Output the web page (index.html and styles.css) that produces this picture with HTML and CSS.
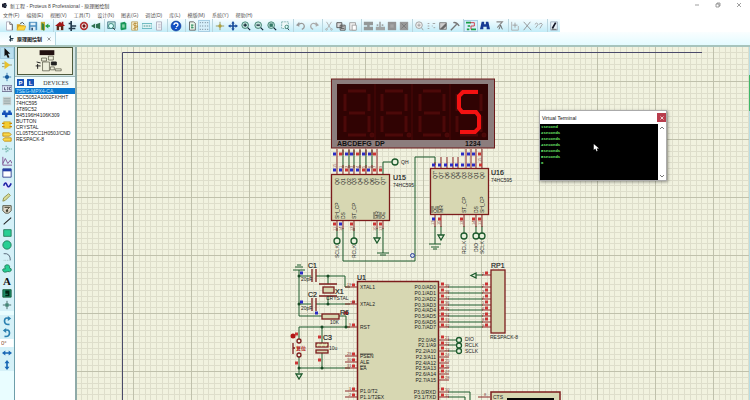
FILE: index.html
```
<!DOCTYPE html>
<html lang="zh-CN">
<head>
    <meta charset="UTF-8">
    <meta name="viewport" content="width=device-width, initial-scale=1.0">
    <title>新工程 - Proteus 8 Professional - 原理图绘制</title>
    <link rel="stylesheet" href="styles.css">
</head>
<body>

    <!-- Title Bar -->
    <header class="titlebar">
        <svg class="app-icon" viewBox="0 0 6 6"><path d="M0 1h2v4h-2zM2 0h3v6h-3z" fill="#223"/><path d="M3 2h3v2h-3z" fill="#345"/></svg>
        <h1>新工程 - Proteus 8 Professional - 原理图绘制</h1>
        <div class="window-buttons">
            <button aria-label="Minimize"><svg viewBox="0 0 8 8"><path d="M2 4h4"/></svg></button>
            <button aria-label="Restore"><svg viewBox="0 0 8 8"><path d="M2 3h3v3h-3zM3 3v-1h3v3h-1"/></svg></button>
            <button aria-label="Close"><svg viewBox="0 0 8 8"><path d="M2 2l4 4M6 2l-4 4"/></svg></button>
        </div>
    </header>

    <!-- Menu -->
    <nav class="menu">
        <a href="#">文件(F)</a>
        <a href="#">编辑(E)</a>
        <a href="#">视图(V)</a>
        <a href="#">工具(T)</a>
        <a href="#">设计(N)</a>
        <a href="#">图表(G)</a>
        <a href="#">调试(D)</a>
        <a href="#">库(L)</a>
        <a href="#">模版(M)</a>
        <a href="#">系统(Y)</a>
        <a href="#">帮助(H)</a>
    </nav>

    <!-- Toolbar -->
    <div class="toolbar">
        <div class="group">
            <button aria-label="New"><svg viewBox="0 0 12 12"><path d="M3 1h4l3 3v7h-7z" fill="#fff" stroke="#aab"/><path d="M7 1v3h3v7" fill="none" stroke="#555"/></svg></button>
            <button aria-label="Open"><svg viewBox="0 0 12 12"><path d="M1 4h4l1 1h4v5h-9z" fill="#d9a520"/><path d="M3 6h9l-2 5h-9z" fill="#ffd53a" stroke="#b8860b" stroke-width=".5"/><path d="M5 3q3-3 5 1" fill="none" stroke="#333"/></svg></button>
            <button aria-label="Save"><svg viewBox="0 0 12 12"><path d="M1 1h10v10h-10z" fill="#4c8fc0"/><path d="M3 2h6v3h-6zM3 7h6v4h-6z" fill="#dceef8"/><path d="M4 8h2v3h-2z" fill="#357"/></svg></button>
            <button aria-label="Close project"><svg viewBox="0 0 12 12"><path d="M1 1h5v10h-5z" fill="#c9b23a"/><path d="M2 2l3 2v8l-3-2z" fill="#39823e"/><path d="M6 6l4-3v2h2v2h-2v2z" fill="#27a147"/></svg></button>
        </div>
        <div class="group">
            <button aria-label="Home"><svg viewBox="0 0 12 12"><path d="M0 6l6-5 2 2v-2h2v3l2 2z" fill="#a11717"/><path d="M2 6h8v5h-8z" fill="#5c2a1a"/><path d="M5 7h2v4h-2z" fill="#fff"/></svg></button>
            <button aria-label="Schematic"><svg viewBox="0 0 12 12"><path d="M5 0v12M2 3h4M6 6h5M2 9h8" stroke="#223a4c" stroke-width="2"/></svg></button>
            <button aria-label="PCB"><svg viewBox="0 0 12 12"><circle cx="6" cy="6" r="4" fill="#fff" stroke="#b03030" stroke-width="2"/><circle cx="6" cy="6" r="2" fill="#701818"/></svg></button>
            <button aria-label="3D viewer"><svg viewBox="0 0 12 12"><path d="M0 6l5-3v6zM6 4l5-2v8l-5-2z" fill="#2e7050"/></svg></button>
        </div>
        <div class="group">
            <button aria-label="Gerber"><svg viewBox="0 0 12 12"><path d="M2 1h9v8h-9z" fill="#bfe3dc" stroke="#478"/><circle cx="6" cy="6" r="3" fill="#dff" stroke="#287a6c"/><path d="M8 8l3 3" stroke="#333"/></svg></button>
            <button aria-label="Explorer"><svg viewBox="0 0 12 12"><path d="M3 2l5-1 2 2v7l-6 1-1-1z" fill="#199759"/><path d="M5 4h3v4h-3z" fill="#8bd8ac"/></svg></button>
            <button aria-label="Bill of materials"><svg viewBox="0 0 12 12"><path d="M2 1h7v10h-7z" fill="#f7efcf" stroke="#b99f5f"/><path d="M8 3q-4-1-4 1t4 2-4 3M6 2v9" fill="none" stroke="#b1842b"/></svg></button>
            <button aria-label="Source"><svg viewBox="0 0 12 12"><path d="M0 3h12v6h-12z" fill="#dff3f3" stroke="#5cb0b8"/><path d="M2 6h2M5 6h2M8 6h2" stroke="#388"/></svg></button>
            <button aria-label="Notes"><svg viewBox="0 0 12 12"><path d="M3 1h6v10h-6z" fill="#f3f6f8" stroke="#aab"/><path d="M5 4h3M5 6h3M5 8h3" stroke="#88a" stroke-width=".5"/></svg></button>
        </div>
        <div class="group help">
            <button aria-label="Help"><svg viewBox="0 0 12 12"><circle cx="6" cy="6" r="5" fill="#1150c4" stroke="#0a2e80" stroke-width=".5"/><path d="M4 5q0-2 2-2t2 2q0 1-2 2M6 8v1" fill="none" stroke="#fff" stroke-width="1.3"/></svg></button>
        </div>
        <div class="group">
            <button aria-label="Redraw"><svg viewBox="0 0 12 12"><path d="M3 1h5l2 2v8h-7z" fill="#eaf6ea" stroke="#555"/><path d="M5 5h3M5 8h3M6 4v5" stroke="#285"/></svg></button>
            <button class="pressed" aria-label="Grid"><svg viewBox="0 0 12 12"><path d="M1 2h10M1 6h10M1 10h10" stroke="#456" stroke-width="1" stroke-dasharray="1 2"/></svg></button>
        </div>
        <div class="group wide">
            <button aria-label="Origin"><svg viewBox="0 0 12 12"><path d="M6 1v10M1 6h10" stroke="#8a8a4c"/><circle cx="6" cy="6" r="2" fill="#b1a13a"/></svg></button>
            <button aria-label="Pan"><svg viewBox="0 0 12 12"><path d="M6 0l2 3h-1v2h2v-1l3 2-3 2v-1h-2v2h1l-2 3-2-3h1v-2h-2v1l-3-2 3-2v1h2v-2h-1z" fill="#184c9c"/></svg></button>
            <button aria-label="Zoom in"><svg viewBox="0 0 12 12"><circle cx="5" cy="5" r="4" fill="#bfe0da" stroke="#376"/><path d="M3 5h4M5 3v4M8 8l3 3" stroke="#123" stroke-width="1.4"/></svg></button>
            <button aria-label="Zoom out"><svg viewBox="0 0 12 12"><circle cx="5" cy="5" r="4" fill="#bfe0da" stroke="#376"/><path d="M3 5h4M8 8l3 3" stroke="#123" stroke-width="1.4"/></svg></button>
            <button aria-label="Zoom all"><svg viewBox="0 0 12 12"><circle cx="5" cy="5" r="4" fill="#bfe0da" stroke="#376"/><path d="M3 3h4v4h-4z" fill="#376"/><path d="M8 8l3 3" stroke="#123" stroke-width="1.4"/></svg></button>
            <button aria-label="Zoom area"><svg viewBox="0 0 12 12"><path d="M2 1h8v8h-8z" fill="#eef8f8" stroke="#7aa" stroke-dasharray="2 1"/><circle cx="8" cy="7" r="2" fill="#dff" stroke="#376"/><path d="M9 9l2 2" stroke="#123"/></svg></button>
        </div>
        <div class="group wide">
            <button aria-label="Undo"><svg viewBox="0 0 12 12"><path d="M3 4q6-3 7 2 0 3-3 4" fill="none" stroke="#999" stroke-width="1.5"/><path d="M0 5l4-4v6z" fill="#999"/></svg></button>
            <button aria-label="Redo"><svg viewBox="0 0 12 12"><path d="M9 4q-6-3-7 2 0 3 3 4" fill="none" stroke="#aaa" stroke-width="1.5"/><path d="M12 5l-4-4v6z" fill="#aaa"/></svg></button>
        </div>
        <div class="group">
            <button aria-label="Cut"><svg viewBox="0 0 12 12"><path d="M3 1l5 8M9 1l-5 8" stroke="#aaa"/><circle cx="3" cy="10" r="1" fill="none" stroke="#aaa"/><circle cx="9" cy="10" r="1" fill="none" stroke="#aaa"/></svg></button>
            <button aria-label="Copy"><svg viewBox="0 0 12 12"><path d="M1 2h6v6h-6zM5 5h6v6h-6z" fill="#ddd" stroke="#444"/><path d="M6 7h4M6 9h4" stroke="#555"/></svg></button>
            <button aria-label="Paste"><svg viewBox="0 0 12 12"><path d="M2 2h7v9h-7z" fill="#eee" stroke="#999"/><path d="M5 5h5v6h-5z" fill="#fff" stroke="#999"/></svg></button>
        </div>
        <div class="group">
            <button aria-label="Block copy"><svg viewBox="0 0 12 12"><path d="M1 1h11v4h-4v2h4v4h-11v-4h4v-2h-4z" fill="#949898"/></svg></button>
            <button aria-label="Block move"><svg viewBox="0 0 12 12"><path d="M1 7h4v-6h2v6h5v4h-11zM2 4h2v2h-2zM8 4h2v2h-2z" fill="#a2a6a6"/></svg></button>
            <button aria-label="Block rotate"><svg viewBox="0 0 12 12"><path d="M1 1h10v10h-10z" fill="#939393"/><path d="M4 4h4v4h-4z" fill="#a5a5a5"/></svg></button>
            <button aria-label="Block delete"><svg viewBox="0 0 12 12"><path d="M1 1h10v10h-10z" fill="#989898"/><path d="M3 3l6 6M9 3l-6 6" stroke="#777"/></svg></button>
        </div>
        <div class="group">
            <button aria-label="Pick part"><svg viewBox="0 0 12 12"><circle cx="6" cy="5" r="4" fill="#eee" stroke="#999"/><path d="M4 5h4M6 3v4M9 8l2 3" stroke="#999"/></svg></button>
            <button aria-label="Make device"><svg viewBox="0 0 12 12"><path d="M2 3h2M2 6h2M2 9h2M8 3h3M7 6h1M9 8h2" stroke="#999"/></svg></button>
            <button aria-label="Packaging"><svg viewBox="0 0 12 12"><path d="M2 2h8v8h-8z" fill="#ccc" stroke="#777"/><path d="M2 10l8-8v4l-4 4z" fill="#666"/></svg></button>
            <button aria-label="Decompose"><svg viewBox="0 0 12 12"><path d="M1 11l7-7M4 2q4-1 7 4" fill="none" stroke="#777" stroke-width="1.6"/></svg></button>
        </div>
        <div class="group wider">
            <button class="pressed" aria-label="Wire autorouter"><svg viewBox="0 0 12 12"><path d="M0 2h6M6 10h6M2 6h3M1 10h3" stroke="#18a048" stroke-width="2"/><path d="M5 2h5v4h-4v4" fill="none" stroke="#c23" /></svg></button>
            <button aria-label="Search"><svg viewBox="0 0 12 12"><path d="M2 1h3v3h2v-3h3l2 9h-4v-3h-4v3h-4z" fill="#173a94"/></svg></button>
            <button aria-label="Property assignment"><svg viewBox="0 0 12 12"><path d="M3 1h7l-6 7" fill="none" stroke="#888" stroke-width="1.4"/><path d="M6 10l2-5 2 5" fill="none" stroke="#555"/></svg></button>
        </div>
        <div class="group">
            <button aria-label="New sheet"><svg viewBox="0 0 12 12"><path d="M2 1v10h8v-5" fill="none" stroke="#aaa"/><path d="M6 2v6M3 5h6" stroke="#999"/></svg></button>
            <button aria-label="Remove sheet"><svg viewBox="0 0 12 12"><path d="M2 1l9 10M10 1l-8 10" stroke="#888"/></svg></button>
            <button aria-label="Exit sheet"><svg viewBox="0 0 12 12"><path d="M1 4q2-3 4 0l-3 4M6 4q3-3 4 0l-3 5" fill="none" stroke="#999"/></svg></button>
        </div>
        <div class="group">
            <button aria-label="Electrical check"><svg viewBox="0 0 12 12"><path d="M2 1h8v10h-8z" fill="#e7f2f7" stroke="#9ab"/><path d="M4 9l4-7" stroke="#112" stroke-width="2"/><path d="M3 10h6" stroke="#555"/></svg></button>
        </div>
    </div>

    <!-- Tabs -->
    <div class="tabs">
        <div class="tab">
            <svg viewBox="0 0 12 12"><path d="M5 0v12M2 3h4M6 6h5M2 9h8" stroke="#223a4c" stroke-width="2"/></svg>
            <span>原理图绘制</span>
            <button aria-label="Close tab"><svg viewBox="0 0 8 8"><path d="M1 1l6 6M7 1l-6 6"/></svg></button>
        </div>
    </div>

    <main>
        <!-- Mode Selector -->
        <div class="modes">
            <button class="pressed" aria-label="Selection"><svg viewBox="0 0 12 12"><path d="M3 0v10l2-2 2 4 2-1-2-4h3z" fill="#111"/></svg></button>
            <button aria-label="Component"><svg viewBox="0 0 12 12"><path d="M3 1l7 5-7 5z" fill="#e8c22c"/><path d="M0 4h3M0 8h3M9 6h3" stroke="#886"/></svg></button>
            <button aria-label="Junction"><svg viewBox="0 0 12 12"><path d="M6 1v10M1 6h10" stroke="#2a6ea8"/><circle cx="6" cy="6" r="2.5" fill="#165a9c"/></svg></button>
            <button aria-label="Wire label"><svg viewBox="0 0 12 12"><path d="M0 2h12v7h-12z" fill="#dde6f6" stroke="#668"/><path d="M3 4v3h2M6 4h1v3h-1M11 4h-2v3h2" fill="none" stroke="#446"/></svg></button>
            <button aria-label="Text script"><svg viewBox="0 0 12 12"><path d="M1 1h10v10h-10z" fill="#c8d0d0"/><path d="M2 3h8M2 5h8M2 7h8M2 9h8" stroke="#9aa"/></svg></button>
            <button aria-label="Bus"><svg viewBox="0 0 12 12"><path d="M0 7h12M3 7v-4M9 7v-4M5 7v4" stroke="#1552b8" stroke-width="3"/></svg></button>
            <button aria-label="Subcircuit"><svg viewBox="0 0 12 12"><path d="M2 2h8v8h-8z" fill="#f3cd30" stroke="#b48a10" stroke-width=".5"/><path d="M0 4h3M0 8h3M9 4h3M9 8h3" stroke="#c80" stroke-width="1.5"/></svg></button>
            <button aria-label="Terminal"><svg viewBox="0 0 12 12"><path d="M1 1h8l2 2-2 2h-8zM3 7h8v4h-8l-2-2z" fill="#f8d94a" stroke="#c08a10"/></svg></button>
            <button aria-label="Device pin"><svg viewBox="0 0 12 12"><path d="M5 2v8M0 6h5M7 4v5M8 6h4" stroke="#4a9a8c" stroke-dasharray="2 1"/></svg></button>
            <button aria-label="Graph"><svg viewBox="0 0 12 12"><path d="M1 1v10h11M1 9l3-6 3 6 3-4 2 4" fill="none" stroke="#748"/></svg></button>
            <button aria-label="Active popup"><svg viewBox="0 0 12 12"><path d="M1 1h10v10h-10z" fill="#fff" stroke="#238"/><path d="M1 1h10v3h-10z" fill="#2340a8"/></svg></button>
            <button aria-label="Generator"><svg viewBox="0 0 12 12"><circle cx="6" cy="6" r="5" fill="#e5e8ff"/><path d="M2 7q2-6 4-1t5-2" fill="none" stroke="#2228a8" stroke-width="2"/></svg></button>
            <button aria-label="Probe"><svg viewBox="0 0 12 12"><path d="M1 11l1-4 6-5 2 2-6 6z" fill="#d8dc96" stroke="#884"/></svg></button>
            <button aria-label="Instruments"><svg viewBox="0 0 12 12"><path d="M1 2h10v6l-3 3h-4l-3-3z" fill="#ded7c8" stroke="#443"/><path d="M3 4h6M6 7l3-3" stroke="#221"/><circle cx="6" cy="8" r="1.5" fill="#443"/></svg></button>
            <button aria-label="Line"><svg viewBox="0 0 12 12"><path d="M2 10l9-8" stroke="#222" stroke-width="1.3"/></svg></button>
            <button aria-label="Box"><svg viewBox="0 0 12 12"><path d="M2 2h9v8h-9z" fill="#26cf94" stroke="#275"/></svg></button>
            <button aria-label="Circle"><svg viewBox="0 0 12 12"><circle cx="6" cy="6" r="5" fill="#26cf94" stroke="#275"/></svg></button>
            <button aria-label="Arc"><svg viewBox="0 0 12 12"><path d="M2 2q8-1 8 8" fill="none" stroke="#456"/><path d="M2 10h8" stroke="#9bb" stroke-dasharray="1 1"/></svg></button>
            <button aria-label="Path"><svg viewBox="0 0 12 12"><path d="M4 6q-2-5 2-5t3 4q3 0 2 3-2 2-4 1-5 2-6-1t3-2z" fill="#26cf94" stroke="#275"/></svg></button>
            <button class="letter" aria-label="Text">A</button>
            <button aria-label="Symbol"><svg viewBox="0 0 12 12"><path d="M1 2h10v9h-10z" fill="#1d8c68" stroke="#153"/><path d="M9 4h-4v2h3v3h-4" fill="none" stroke="#021" stroke-width="2"/></svg></button>
            <button aria-label="Marker"><svg viewBox="0 0 12 12"><path d="M6 1v10M1 6h10" stroke="#355"/><path d="M4 4h4v4h-4z" fill="#487"/></svg></button>
            <div class="rotate">
                <button aria-label="Rotate clockwise"><svg viewBox="0 0 12 12"><path d="M9 10q-6 1-6-4t6-3" fill="none" stroke="#2b80b0" stroke-width="2"/><path d="M7 0l4 3-4 3z" fill="#2b80b0"/></svg></button>
                <button aria-label="Rotate anticlockwise"><svg viewBox="0 0 12 12"><path d="M3 10q6 1 6-4t-6-3" fill="none" stroke="#2b80b0" stroke-width="2"/><path d="M5 0l-4 3 4 3z" fill="#2b80b0"/></svg></button>
                <input type="text" value="0°" aria-label="Angle">
                <button aria-label="Mirror X"><svg viewBox="0 0 12 12"><path d="M0 6l4-3v2h4v-2l4 3-4 3v-2h-4v2z" fill="#1866b4"/></svg></button>
                <button aria-label="Mirror Y"><svg viewBox="0 0 12 12"><path d="M6 0l3 4h-2v4h2l-3 4-3-4h2v-4h-2z" fill="#1866b4"/></svg></button>
            </div>
        </div>

        <!-- Object Selector -->
        <aside class="sidebar">
            <div class="overview">
                <svg viewBox="0 0 55 26"><path d="M22 2h15v5h-15z" fill="#211"/><path d="M24 10h5v3h-5zM31 8h5v4h-5zM25 14h7v9h-7zM38 21h6v2h-6zM33 19h4v3h-4z" fill="#eeefdc" stroke="#332" stroke-width=".6"/><path d="M19 14l4 1M18 18h5M20 16v5M34 14h5v3h-5z" fill="#222" stroke="#222"/></svg>
            </div>
            <div class="devices-head">
                <button>P</button>
                <button>L</button>
                <span>DEVICES</span>
            </div>
            <ul class="devices">
                <li class="selected">7SEG-MPX4-CA</li>
                <li>2CC5052A1002FKHHT</li>
                <li>74HC595</li>
                <li>AT89C52</li>
                <li>B45196H4106K309</li>
                <li>BUTTON</li>
                <li>CRYSTAL</li>
                <li>CL05T5CC1H050J/CND</li>
                <li>RESPACK-8</li>
            </ul>
        </aside>

        <!-- Schematic -->
        <section class="canvas">
            <svg class="sheet" viewBox="77 47 1400 900" width="1400" height="900">
                <defs>
                    <pattern id="grid" x="75" y="81" width="58" height="58" patternUnits="userSpaceOnUse">
                        <rect width="58" height="58" fill="#f1f2df"/>
                        <path class="minor" d="M6.5 0v58M12.5 0v58M17.5 0v58M23.5 0v58M29.5 0v58M35.5 0v58M41.5 0v58M46.5 0v58M52.5 0v58M0 6.5h58M0 12.5h58M0 17.5h58M0 23.5h58M0 29.5h58M0 35.5h58M0 41.5h58M0 46.5h58M0 52.5h58"/>
                        <path class="major" d="M.5 0v58M0 .5h58"/>
                    </pattern>
                    <g id="digit">
                        <path d="M3 0h18M24 3v17M24 25v16M3 44h18M0 25v16M0 3v17M4 22h16"/>
                        <circle cx="27" cy="44" r="1"/>
                    </g>
                </defs>
                <rect x="77" y="47" width="1400" height="900" fill="url(#grid)"/>
                <path class="border" d="M122.5 900V52.5H702"/>

                <!-- seven segment display -->
                <rect x="331.500" y="79" width="163" height="69" fill="#8c7d7d" stroke="#6e1a1a"/>
                <rect x="337" y="84" width="151" height="56" fill="#300303"/>
                <path d="M375 84v56M412 84v56M450 84v56" stroke="#4c0909"/>
                <g class="ghost">
                    <use href="#digit" x="345" y="91"/>
                    <use href="#digit" x="382" y="91"/>
                    <use href="#digit" x="420" y="91"/>
                    <use href="#digit" x="457" y="91"/>
                </g>
                <path class="lit" d="M478 92h-15l-4 4v12l3 4h14l3 4v12l-4 4h-15"/>
                <g class="seg-label">
                    <text x="337" y="146">ABCDEFG</text>
                    <text x="375" y="146">DP</text>
                    <text x="465" y="146">1234</text>
                </g>

                <!-- wires -->
                <path class="wire" d="M343 150v18M349 150v18M354 150v18M360 150v18M366 150v18M372 150v18M383 174v-12h9M337 228v10M354 228v10M343 228v33h72v-104h20v8M377 228v10M383 228v25M435 226v18M441 226v10M464 226v8M476 226v8M482 226v8M377 253h12M380 255h6M429 244h12M431 247h8M433 249h4"/>
                <path class="pin" d="M337 149v26M343 165v10M349 165v10M354 165v10M360 165v10M366 165v10M372 165v10M377 149v26M343 149v6M349 149v6M354 149v6M360 149v6M366 149v6M372 149v6M337 221v10M343 221v8M354 221v10M377 221v8M383 221v8M466 149v19M471 149v19M476 149v19M482 149v19M435 162v6M441 157v11M447 157v11M453 157v11M458 157v11M435 215v12M441 215v12M464 215v12M476 215v12M482 215v12"/>
                <g class="node">
                    <circle cx="395" cy="162" r="3"/>
                    <circle cx="337" cy="241" r="3"/>
                    <circle cx="354" cy="241" r="3"/>
                    <circle cx="464" cy="236" r="3"/>
                    <circle cx="476" cy="236" r="3"/>
                    <circle cx="482" cy="236" r="3"/>
                    <path d="M374 238h6l-3 5zM438 235h6l-3 5z"/>
                </g>

                <!-- shift registers -->
                <g class="chip">
                    <rect x="331.500" y="174.500" width="58" height="46"/>
                    <rect x="430.500" y="168.500" width="58" height="46"/>
                </g>
                <path class="blue-dots" d="M333 154h3M345 154h3M350 154h3M362 154h3M368 154h3M333 170h3M339 170h3M350 170h3M356 170h3M367 170h3M461 154h3M467 154h3M472 154h3M432 165h3M438 165h3M444 165h3M450 165h3M455 165h3M461 165h3M467 165h3M472 165h3M339 224h3M432 219h3"/>
                <path class="red-dots" d="M339 154h3M356 154h3M373 154h3M345 170h3M362 170h3M373 170h3M379 170h3M478 154h3M479 165h3M333 224h3M350 224h3M373 224h3M379 224h3M438 219h3M460 219h3M472 219h3M478 219h3"/>
                <g class="tiny">
                    <text transform="translate(339 185) rotate(-90)">Q0</text>
                    <text transform="translate(345 185) rotate(-90)">Q1</text>
                    <text transform="translate(351 185) rotate(-90)">Q2</text>
                    <text transform="translate(356 185) rotate(-90)">Q3</text>
                    <text transform="translate(362 185) rotate(-90)">Q4</text>
                    <text transform="translate(368 185) rotate(-90)">Q5</text>
                    <text transform="translate(374 185) rotate(-90)">Q6</text>
                    <text transform="translate(379 185) rotate(-90)">Q7</text>
                    <text transform="translate(385 185) rotate(-90)">Q7'</text>
                    <text transform="translate(339 219) rotate(-90)">SH_CP</text>
                    <text transform="translate(345 219) rotate(-90)">DS</text>
                    <text transform="translate(356 219) rotate(-90)">ST_CP</text>
                    <text transform="translate(379 219) rotate(-90)">MR</text>
                    <text transform="translate(385 219) rotate(-90)">OE</text>
                    <text transform="translate(437 179) rotate(-90)">Q7'</text>
                    <text transform="translate(443 179) rotate(-90)">Q7</text>
                    <text transform="translate(449 179) rotate(-90)">Q6</text>
                    <text transform="translate(455 179) rotate(-90)">Q5</text>
                    <text transform="translate(460 179) rotate(-90)">Q4</text>
                    <text transform="translate(466 179) rotate(-90)">Q3</text>
                    <text transform="translate(472 179) rotate(-90)">Q2</text>
                    <text transform="translate(478 179) rotate(-90)">Q1</text>
                    <text transform="translate(484 179) rotate(-90)">Q0</text>
                    <text transform="translate(437 213) rotate(-90)">OE</text>
                    <text transform="translate(443 213) rotate(-90)">MR</text>
                    <text transform="translate(466 213) rotate(-90)">ST_CP</text>
                    <text transform="translate(478 213) rotate(-90)">DS</text>
                    <text transform="translate(484 213) rotate(-90)">SH_CP</text>
                    <text transform="translate(339 258) rotate(-90)">SCLK</text>
                    <text transform="translate(356 258) rotate(-90)">RCLK</text>
                    <text transform="translate(466 254) rotate(-90)">RCLK</text>
                    <text transform="translate(478 252) rotate(-90)">DIO</text>
                    <text transform="translate(484 254) rotate(-90)">SCLK</text>
                    <text x="401" y="164">QH</text>
                    <text x="393" y="187">74HC595</text>
                    <text x="491" y="182">74HC595</text>
                </g>
                <path d="M374 212v7M380 212v7M432 206v7M438 206v7" stroke="#222" stroke-width=".7"/>
                <g class="pin-no">
                    <text transform="translate(336 231) rotate(-90)">11</text>
                    <text transform="translate(342 231) rotate(-90)">14</text>
                    <text transform="translate(353 231) rotate(-90)">12</text>
                    <text transform="translate(376 231) rotate(-90)">10</text>
                    <text transform="translate(382 231) rotate(-90)">13</text>
                    <text transform="translate(434 225) rotate(-90)">13</text>
                    <text transform="translate(440 225) rotate(-90)">10</text>
                    <text transform="translate(463 225) rotate(-90)">12</text>
                    <text transform="translate(475 225) rotate(-90)">14</text>
                    <text transform="translate(481 225) rotate(-90)">11</text>
                    <text transform="translate(336 168) rotate(-90)">15</text>
                    <text transform="translate(342 168) rotate(-90)">1</text>
                    <text transform="translate(348 168) rotate(-90)">2</text>
                    <text transform="translate(353 168) rotate(-90)">3</text>
                    <text transform="translate(359 168) rotate(-90)">4</text>
                    <text transform="translate(365 168) rotate(-90)">5</text>
                    <text transform="translate(371 168) rotate(-90)">6</text>
                    <text transform="translate(376 168) rotate(-90)">7</text>
                    <text transform="translate(382 168) rotate(-90)">9</text>
                    <text transform="translate(481 162) rotate(-90)">15</text>
                </g>
                <circle cx="412.500" cy="255.500" r="2" fill="#cfd8e8" stroke="#2a3f98"/>

                <!-- microcontroller -->
                <path d="M357.500 900V281.500H438.500V900" fill="#d7d7b2" stroke="#7c1c1c" stroke-width="1.500"/>
                <path class="wire" d="M299 270v46h23M299 276h12M316 276h29v11h5M328 276v8M328 296v8M299 304h12M316 304h34M339 316h7v11M299 339v-12h51M322 327v16M322 353v15M299 357v16M299 368h51M293 270h12M295 267h8M297 265h4M448 287h35M448 293h35M448 299h35M448 305h35M448 310h35M448 316h35M448 322h35M448 327h35M448 340h9M448 345h9M448 351h9M475 275h8M448 392h22v12M448 397h17v8"/>
                <path class="pin" d="M345 287h12M345 304h12M345 327h12M345 356h12M345 362h12M345 368h12M345 391h12M345 397h12M438 287h11M438 293h11M438 299h11M438 305h11M438 310h11M438 316h11M438 322h11M438 327h11M438 340h11M438 345h11M438 351h11M438 357h11M438 363h11M438 368h11M438 374h11M438 380h11M438 392h11M438 397h11M482 275h9M482 287h9M482 293h9M482 299h9M482 305h9M482 310h9M482 316h9M482 322h9M482 327h9M478 397h12"/>
                <g class="part">
                    <path d="M312 269v13M316 269v13M312 298v13M316 298v13M319 284h18M319 296h18M293 343v11M293 348h2"/>
                    <rect x="323" y="287" width="11" height="6"/>
                    <rect x="322" y="314" width="17" height="5"/>
                    <rect x="316" y="343" width="12" height="4" fill="#7c1c1c"/>
                    <path d="M317 346l2-2M321 346l2-2M325 346l2-2" stroke="#eeb"/>
                    <rect x="316" y="350" width="12" height="3"/>
                    <circle cx="299" cy="341" r="2"/>
                    <circle cx="299" cy="355" r="2"/>
                    <rect x="491" y="270" width="14" height="63"/>
                </g>
                <circle cx="293" cy="336" r="2.500" fill="#b01414"/>
                <g class="joint">
                    <circle cx="299" cy="276" r="1.500"/>
                    <circle cx="328" cy="276" r="1.500"/>
                    <circle cx="299" cy="304" r="1.500"/>
                    <circle cx="328" cy="304" r="1.500"/>
                    <circle cx="346" cy="327" r="1.500"/>
                    <circle cx="322" cy="327" r="1.500"/>
                    <circle cx="299" cy="368" r="1.500"/>
                    <circle cx="322" cy="368" r="1.500"/>
                </g>
                <g class="node">
                    <circle cx="459" cy="340" r="2.500"/>
                    <circle cx="459" cy="345.500" r="2.500"/>
                    <circle cx="459" cy="351" r="2.500"/>
                    <path d="M296 374h6l-3 5zM476 273v5l-5-2.500z"/>
                </g>
                <path class="blue-dots" d="M300 273h3M300 302h3M315 313h3"/>
                <path class="red-dots" d="M344 313h4M318 337h3M318 360h3M295 334h3M295 363h3M352 285h3M352 302h3M352 325h3M352 354h3M352 360h3M352 366h3M352 389h3M352 395h3M441 284h3M441 290h3M441 296h3M441 302h3M441 308h3M441 314h3M441 319h3M441 325h3M441 337h3M441 343h3M441 348h3M441 354h3M441 360h3M441 366h3M441 371h3M441 377h3M441 389h3M441 395h3M485 273h3M485 284h3M485 290h3M485 296h3M485 302h3M485 308h3M485 314h3M485 319h3M485 325h3"/>
                <g class="name">
                    <text x="393" y="180">U15</text>
                    <text x="491" y="175">U16</text>
                    <text x="357" y="280">U1</text>
                    <text x="308" y="268">C1</text>
                    <text x="308" y="297">C2</text>
                    <text x="335" y="294">X1</text>
                    <text x="340" y="315">R6</text>
                    <text x="323" y="340">C3</text>
                    <text x="491" y="268">RP1</text>
                </g>
                <g class="tiny">
                    <text x="301" y="281">20pF</text>
                    <text x="301" y="310">20pF</text>
                    <text x="326" y="300">CRYSTAL</text>
                    <text x="330" y="324">10K</text>
                    <text x="329" y="350">10u</text>
                    <text class="hot" x="296" y="350">复位</text>
                    <text x="490" y="339">RESPACK-8</text>
                    <text x="465" y="341">DIO</text>
                    <text x="465" y="347">RCLK</text>
                    <text x="465" y="353">SCLK</text>
                    <text x="360" y="289">XTAL1</text>
                    <text x="360" y="306">XTAL2</text>
                    <text x="360" y="329">RST</text>
                    <text x="360" y="358">PSEN</text>
                    <text x="360" y="364">ALE</text>
                    <text x="360" y="370">EA</text>
                    <text x="360" y="393">P1.0/T2</text>
                    <text x="360" y="399">P1.1/T2EX</text>
                </g>
                <path d="M360 354h13M360 366h6" stroke="#222" stroke-width=".7"/>
                <g class="tiny end">
                    <text x="436" y="289">P0.0/AD0</text>
                    <text x="436" y="295">P0.1/AD1</text>
                    <text x="436" y="301">P0.2/AD2</text>
                    <text x="436" y="307">P0.3/AD3</text>
                    <text x="436" y="312">P0.4/AD4</text>
                    <text x="436" y="318">P0.5/AD5</text>
                    <text x="436" y="324">P0.6/AD6</text>
                    <text x="436" y="329">P0.7/AD7</text>
                    <text x="436" y="342">P2.0/A8</text>
                    <text x="436" y="347">P2.1/A9</text>
                    <text x="436" y="353">P2.2/A10</text>
                    <text x="436" y="359">P2.3/A11</text>
                    <text x="436" y="365">P2.4/A12</text>
                    <text x="436" y="370">P2.5/A13</text>
                    <text x="436" y="376">P2.6/A14</text>
                    <text x="436" y="382">P2.7/A15</text>
                    <text x="436" y="394">P3.0/RXD</text>
                    <text x="436" y="399">P3.1/TXD</text>
                </g>
                <g class="pin-no">
                    <text x="347" y="286">19</text>
                    <text x="350" y="304">18</text>
                    <text x="349" y="326">9</text>
                    <text x="347" y="355">29</text>
                    <text x="347" y="361">30</text>
                    <text x="347" y="367">31</text>
                    <text x="349" y="390">1</text>
                    <text x="349" y="396">2</text>
                    <text x="445" y="287">39</text>
                    <text x="445" y="293">38</text>
                    <text x="445" y="299">37</text>
                    <text x="445" y="304">36</text>
                    <text x="445" y="310">35</text>
                    <text x="445" y="316">34</text>
                    <text x="445" y="321">33</text>
                    <text x="445" y="327">32</text>
                    <text x="445" y="339">21</text>
                    <text x="445" y="345">22</text>
                    <text x="445" y="351">23</text>
                    <text x="445" y="356">24</text>
                    <text x="445" y="362">25</text>
                    <text x="445" y="368">26</text>
                    <text x="445" y="373">27</text>
                    <text x="445" y="379">28</text>
                    <text x="445" y="391">10</text>
                    <text x="445" y="397">11</text>
                    <text x="482" y="275">1</text>
                    <text x="482" y="287">2</text>
                    <text x="482" y="293">3</text>
                    <text x="482" y="299">4</text>
                    <text x="482" y="304">5</text>
                    <text x="482" y="310">6</text>
                    <text x="482" y="316">7</text>
                    <text x="482" y="321">8</text>
                    <text x="482" y="327">9</text>
                    <text x="484" y="396">8</text>
                </g>

                <!-- serial terminal part -->
                <rect x="491" y="392" width="69" height="60" fill="#d7d7b2" stroke="#7c1c1c" stroke-width="1.500"/>
                <rect x="507" y="398" width="47" height="48" fill="#050505"/>
                <g class="tiny"><text x="493" y="399">CTS</text></g>
            </svg>

            <!-- Virtual Terminal -->
            <div class="terminal">
                <div class="terminal-head">
                    <h2>Virtual Terminal</h2>
                    <button aria-label="Close terminal"><svg viewBox="0 0 8 8"><path d="M2 2l4 4M6 2l-4 4"/></svg></button>
                </div>
                <div class="terminal-body">
                    <pre>1second
2seconds
3seconds
4seconds
5seconds
5seconds
6</pre>
                    <div class="scrollbar">
                        <button aria-label="Scroll up"><svg viewBox="0 0 8 8"><path d="M2 5l2-2 2 2"/></svg></button>
                        <button aria-label="Scroll down"><svg viewBox="0 0 8 8"><path d="M2 3l2 2 2-2"/></svg></button>
                    </div>
                </div>
                <svg class="cursor" viewBox="0 0 8 12"><path d="M1 0v8l2-2 2 4 1-1-1-3h3z" fill="#fff"/></svg>
            </div>
        </section>
        <div class="dock"></div>
    </main>

</body>
</html>
```
FILE: styles.css
```
/* Body Styling */
* {
    box-sizing: border-box;
}

body {
    display: flex;
    flex-direction: column;
    height: 100vh;
    margin: 0;
    overflow: hidden;
    background-color: #fff;
    font-family: 'Liberation Sans', 'Noto Sans CJK SC', sans-serif;
    font-size: 6px;
    color: #333;
}

button {
    display: flex;
    align-items: center;
    justify-content: center;
    padding: 0;
    border: none;
    background: none;
    font: inherit;
}

svg {
    display: block;
}

/* Title Bar */
.titlebar {
    display: flex;
    align-items: center;
    gap: 3px;
    height: 10px;
    padding-left: 2px;
}

.app-icon {
    width: 5px;
    height: 5px;
}

h1 {
    flex: 1;
    margin: 0;
    font-size: 5px;
    font-weight: normal;
    color: #444;
}

.window-buttons {
    display: flex;
    gap: 13px;
    padding-right: 7px;
}

.window-buttons svg {
    width: 8px;
    height: 8px;
    fill: none;
    stroke: #777;
    stroke-width: 0.7;
}

/* Menu */
.menu {
    display: flex;
    align-items: center;
    gap: 7px;
    height: 9px;
    padding-left: 3px;
    font-size: 5px;
}

.menu a {
    color: #555;
    text-decoration: none;
    white-space: nowrap;
}

/* Toolbar */
.toolbar {
    display: flex;
    align-self: flex-start;
    gap: 3px;
    height: 13px;
    padding-left: 3px;
    background: linear-gradient(#f6fdff, #c2ecf8);
}

.group {
    display: flex;
    align-items: center;
}

.group + .group {
    box-shadow: -1px 0 #b9d5de;
}

.group button {
    width: 12px;
    height: 12px;
}

.group svg {
    width: 10px;
    height: 10px;
}

.wide button {
    width: 13px;
}

.wider button {
    width: 14px;
}

.help button {
    width: 15px;
}

.help svg {
    width: 12px;
    height: 12px;
}

.pressed {
    background-color: #d6effa;
    box-shadow: inset 0 0 0 1px #a8cfe4;
}

/* Tabs */
.tabs {
    height: 13px;
    background: linear-gradient(#fafeff, #e4fbff);
}

.tab {
    display: inline-flex;
    align-items: center;
    gap: 3px;
    height: 13px;
    padding: 0 4px 0 8px;
    border-right: 1px solid #b5d8e2;
    background: linear-gradient(#e6f9ff, #fff);
    color: #111;
}

.tab span {
    font-size: 5px;
    font-weight: bold;
}

.tab svg {
    width: 6px;
    height: 7px;
}

.tab button svg {
    width: 4px;
    height: 4px;
    stroke: #333;
}

.tab button {
    margin-left: 2px;
}

/* Workspace */
main {
    display: flex;
    flex: 1;
    min-height: 0;
    border-top: 2px solid #a7c4bd;
}

.modes {
    display: flex;
    flex-direction: column;
    align-items: center;
    width: 14px;
    background-color: #e9fdff;
}

.modes button {
    flex: none;
    width: 14px;
    height: 12px;
    background-color: #d5f1f8;
}

.modes button.pressed {
    background-color: #b9dfef;
}

.modes svg {
    width: 10px;
    height: 10px;
}

.modes .letter {
    font-family: 'Liberation Serif', serif;
    font-size: 11px;
    font-weight: bold;
    color: #111;
}

.rotate {
    margin-top: 4px;
}

.modes input {
    display: block;
    width: 13px;
    height: 8px;
    padding: 0 1px;
    border: none;
    background-color: #fff;
    font-size: 6px;
    color: #853;
}

/* Object Selector */
.sidebar {
    width: 63px;
    border-left: 1px solid #6d9eaa;
    border-right: 2px solid #8faaa8;
    background-color: #fff;
}

.overview {
    height: 29px;
    padding: 0 2px 1px;
    background-color: #d5e6e4;
}

.overview svg {
    width: 100%;
    height: 28px;
    border: 1px solid #4e5a3c;
    background-color: #f0f0dd;
}

.devices-head {
    display: flex;
    align-items: center;
    gap: 3px;
    height: 12px;
    padding-left: 2px;
    border-top: 1px solid #9cb9bb;
    background-color: #f2fcfd;
    font-size: 6px;
}

.devices-head button {
    width: 7px;
    height: 7px;
    background-color: #1552b8;
    color: #fff;
    font-weight: bold;
}

.devices-head span {
    flex: 1;
    text-align: center;
    font-family: 'Liberation Serif', serif;
}

.devices {
    margin: 0;
    padding: 0;
    list-style: none;
}

.devices li {
    height: 6px;
    padding-left: 1px;
    font-size: 5px;
    line-height: 6px;
    white-space: nowrap;
    color: #222;
}

.devices .selected {
    background-color: #0a78d0;
    color: #bfe2ff;
}

/* Schematic */
.canvas {
    position: relative;
    flex: 1;
    min-width: 0;
    overflow: hidden;
}

.dock {
    width: 1px;
    background: linear-gradient(#b8dde4 28px, #3fb768 28px, #3fb768 64px, #b8dde4 64px);
}

.minor {
    stroke: #dedecb;
}

.major {
    stroke: #c0c1ac;
}

.border {
    fill: none;
    stroke: #4a4a6a;
}

.ghost {
    fill: #4c0909;
    stroke: #4c0909;
    stroke-width: 3;
}

.lit {
    fill: none;
    stroke: #f31212;
    stroke-width: 4;
}

.seg-label {
    fill: #111;
    font-size: 7px;
    font-weight: bold;
}

.wire {
    fill: none;
    stroke: #1c5a2c;
}

.pin {
    fill: none;
    stroke: #8c2828;
}

.chip rect,
.part rect {
    fill: #d7d7b2;
}

.chip,
.part {
    fill: none;
    stroke: #7c1c1c;
    stroke-width: 1.3;
}

.node {
    fill: #e8f0dc;
    stroke: #1c5a2c;
    stroke-width: 1.3;
}

.joint {
    fill: #174a24;
}

.blue-dots {
    stroke: #2b2bc4;
    stroke-width: 3;
}

.red-dots {
    stroke: #cc3434;
    stroke-width: 3;
}

.tiny {
    fill: #222;
    font-size: 5px;
}

.hot {
    fill: #b01414;
    font-weight: bold;
}

.end {
    text-anchor: end;
}

.pin-no {
    fill: #7c3a3a;
    font-size: 4px;
}

.name {
    fill: #222;
    stroke: #222;
    stroke-width: 0.2;
    font-size: 7px;
}

/* Virtual Terminal */
.terminal {
    position: absolute;
    top: 63px;
    left: 462px;
    width: 128px;
    border: 1px solid #aaa;
    background-color: #fff;
    box-shadow: 1px 1px 3px rgba(0, 0, 0, 0.4);
}

.terminal-head {
    display: flex;
    align-items: center;
    justify-content: space-between;
    height: 13px;
    padding-left: 2px;
}

h2 {
    margin: 0;
    font-size: 5px;
    font-weight: normal;
    color: #111;
}

.terminal-head button {
    width: 9px;
    height: 9px;
    background-color: #b83c4c;
}

.terminal-head svg {
    width: 6px;
    height: 6px;
    stroke: #fff;
}

.terminal-body {
    display: flex;
    height: 56px;
}

pre {
    flex: 1;
    margin: 0;
    padding: 0 1px;
    background-color: #000;
    color: #6be86b;
    font-family: 'Liberation Mono', monospace;
    font-size: 4px;
    font-weight: bold;
    line-height: 6px;
}

.scrollbar {
    display: flex;
    flex-direction: column;
    justify-content: space-between;
    width: 8px;
}

.scrollbar svg {
    width: 8px;
    height: 8px;
    fill: none;
    stroke: #777;
}

.cursor {
    position: absolute;
    top: 33px;
    left: 53px;
    width: 6px;
    height: 9px;
}
```
